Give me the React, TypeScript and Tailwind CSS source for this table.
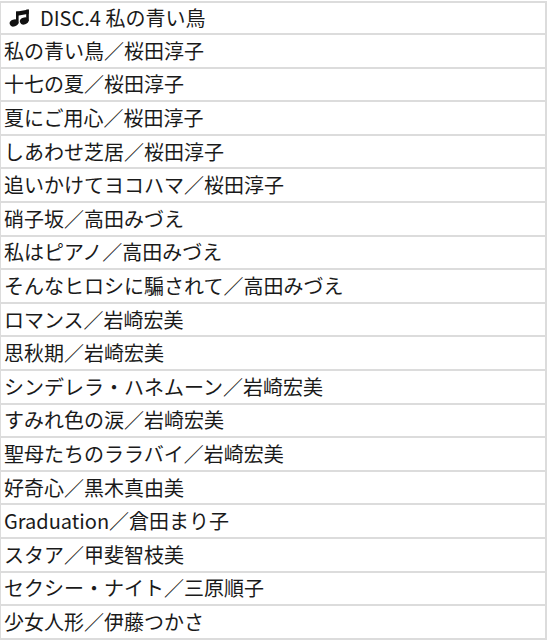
const tracks = [
	"私の青い鳥／桜田淳子",
	"十七の夏／桜田淳子",
	"夏にご用心／桜田淳子",
	"しあわせ芝居／桜田淳子",
	"追いかけてヨコハマ／桜田淳子",
	"硝子坂／高田みづえ",
	"私はピアノ／高田みづえ",
	"そんなヒロシに騙されて／高田みづえ",
	"ロマンス／岩崎宏美",
	"思秋期／岩崎宏美",
	"シンデレラ・ハネムーン／岩崎宏美",
	"すみれ色の涙／岩崎宏美",
	"聖母たちのララバイ／岩崎宏美",
	"好奇心／黒木真由美",
	"Graduation／倉田まり子",
	"スタア／甲斐智枝美",
	"セクシー・ナイト／三原順子",
	"少女人形／伊藤つかさ",
];

function NoteIcon() {
	return (
		<svg className="h-[18px] w-[20px]" viewBox="0 0 20 18" fill="#111">
			<ellipse cx="5" cy="14" rx="4.4" ry="3.4" transform="rotate(-18 5 14)" />
			<ellipse cx="15.2" cy="12" rx="4.4" ry="3.4" transform="rotate(-18 15.2 12)" />
			<rect x="7" y="2.5" width="2.6" height="12" />
			<rect x="17.2" y="0.6" width="2.6" height="11.5" />
			<polygon points="7,2.8 19.8,0.6 19.8,4.8 7,7" />
		</svg>
	);
}

export default function App() {
	return (
		<div
			className="h-[640px] w-[549px] overflow-hidden bg-white text-[#1a1a1a]"
			style={{ fontFamily: '"Noto Sans CJK JP", "Noto Sans", sans-serif' }}
		>
			<div className="mt-px w-[547px] border-t-2 border-r-2 border-l border-[#dcdcdc]">
				<div className="flex h-[32px] items-center gap-[11px] border-b-2 border-[#dcdcdc] pl-[8px] text-[20px] leading-none">
					<NoteIcon />
					<span>DISC.4 私の青い鳥</span>
				</div>
				{tracks.map((track) => (
					<div
						className="flex h-[33.6px] items-center border-b-2 border-[#dcdcdc] pl-[3px] text-[20px] leading-none"
						key={track}
					>
						{track}
					</div>
				))}
			</div>
		</div>
	);
}
